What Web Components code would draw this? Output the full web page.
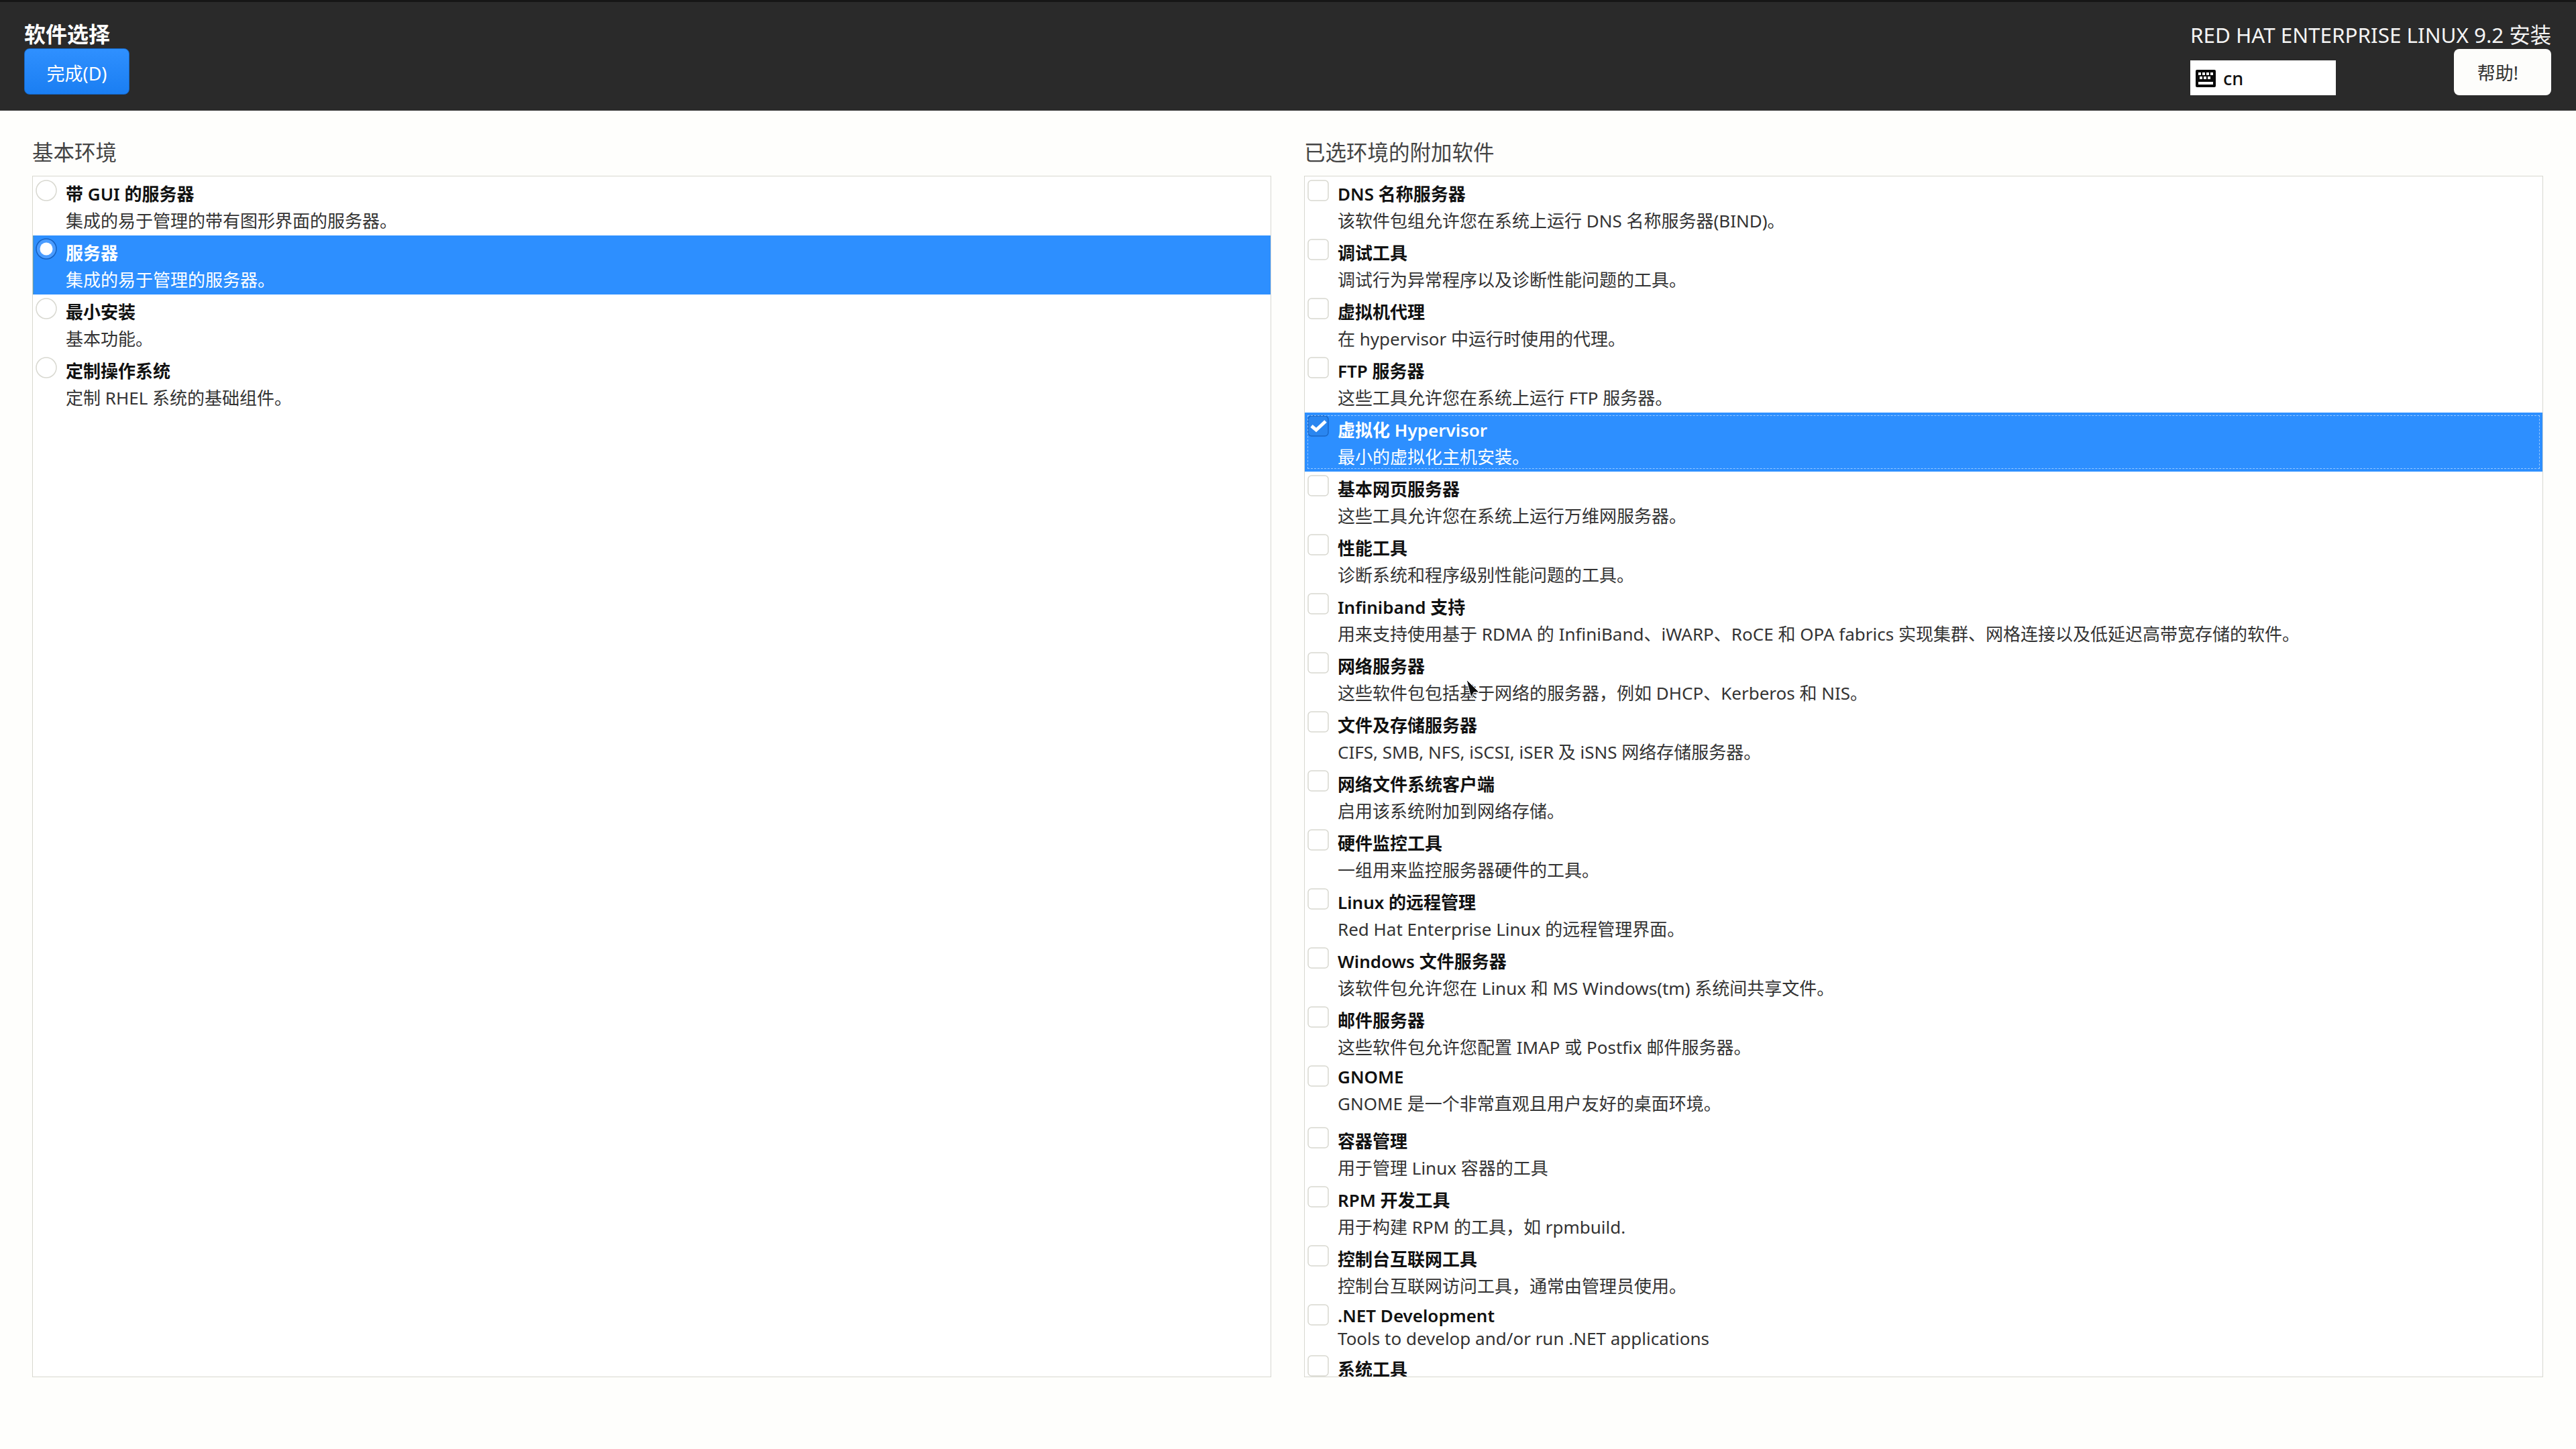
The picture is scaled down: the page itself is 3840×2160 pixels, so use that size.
<!DOCTYPE html>
<html lang="zh">
<head>
<meta charset="utf-8">
<title>软件选择</title>
<style>
    html, body { margin: 0; padding: 0; background: #fefefc; }
    body {
        width: 3840px;
        height: 2160px;
        overflow: hidden;
        position: relative;
        font-family: "Noto Sans", "Noto Sans CJK SC", sans-serif;
    }
</style>
</head>
<body>
<install-header>
    <span slot="title">软件选择</span>
    <span slot="product">RED HAT ENTERPRISE LINUX 9.2 安装</span>
</install-header>

<install-main>
    <option-panel label="基本环境">
        <option-row kind="radio"><span slot="name">带 GUI 的服务器</span>集成的易于管理的带有图形界面的服务器。</option-row>
        <option-row kind="radio" selected><span slot="name">服务器</span>集成的易于管理的服务器。</option-row>
        <option-row kind="radio"><span slot="name">最小安装</span>基本功能。</option-row>
        <option-row kind="radio"><span slot="name">定制操作系统</span>定制 RHEL 系统的基础组件。</option-row>
    </option-panel>
    <option-panel label="已选环境的附加软件">
        <option-row><span slot="name">DNS 名称服务器</span>该软件包组允许您在系统上运行 DNS 名称服务器(BIND)。</option-row>
        <option-row><span slot="name">调试工具</span>调试行为异常程序以及诊断性能问题的工具。</option-row>
        <option-row><span slot="name">虚拟机代理</span>在 hypervisor 中运行时使用的代理。</option-row>
        <option-row><span slot="name">FTP 服务器</span>这些工具允许您在系统上运行 FTP 服务器。</option-row>
        <option-row selected focused><span slot="name">虚拟化 Hypervisor</span>最小的虚拟化主机安装。</option-row>
        <option-row><span slot="name">基本网页服务器</span>这些工具允许您在系统上运行万维网服务器。</option-row>
        <option-row><span slot="name">性能工具</span>诊断系统和程序级别性能问题的工具。</option-row>
        <option-row><span slot="name">Infiniband 支持</span>用来支持使用基于 RDMA 的 InfiniBand、iWARP、RoCE 和 OPA fabrics 实现集群、网格连接以及低延迟高带宽存储的软件。</option-row>
        <option-row><span slot="name">网络服务器</span>这些软件包包括基于网络的服务器，例如 DHCP、Kerberos 和 NIS。</option-row>
        <option-row><span slot="name">文件及存储服务器</span>CIFS, SMB, NFS, iSCSI, iSER 及 iSNS 网络存储服务器。</option-row>
        <option-row><span slot="name">网络文件系统客户端</span>启用该系统附加到网络存储。</option-row>
        <option-row><span slot="name">硬件监控工具</span>一组用来监控服务器硬件的工具。</option-row>
        <option-row><span slot="name">Linux 的远程管理</span>Red Hat Enterprise Linux 的远程管理界面。</option-row>
        <option-row><span slot="name">Windows 文件服务器</span>该软件包允许您在 Linux 和 MS Windows(tm) 系统间共享文件。</option-row>
        <option-row><span slot="name">邮件服务器</span>这些软件包允许您配置 IMAP 或 Postfix 邮件服务器。</option-row>
        <option-row variant="tall"><span slot="name">GNOME</span>GNOME 是一个非常直观且用户友好的桌面环境。</option-row>
        <option-row><span slot="name">容器管理</span>用于管理 Linux 容器的工具</option-row>
        <option-row><span slot="name">RPM 开发工具</span>用于构建 RPM 的工具，如 rpmbuild.</option-row>
        <option-row><span slot="name">控制台互联网工具</span>控制台互联网访问工具，通常由管理员使用。</option-row>
        <option-row variant="latin"><span slot="name">.NET Development</span>Tools to develop and/or run .NET applications</option-row>
        <option-row><span slot="name">系统工具</span>这组软件包允许您进行各种系统管理。</option-row>
    </option-panel>
</install-main>

<mouse-cursor></mouse-cursor>

<script>
const FONT = '"Noto Sans", "Noto Sans CJK SC", sans-serif';

class InstallHeader extends HTMLElement {
    constructor() {
        super();
        this.attachShadow({ mode: 'open' });
        this.shadowRoot.innerHTML = `
            <style>
                :host {
                    display: flex;
                    justify-content: space-between;
                    box-sizing: border-box;
                    height: 165px;
                    padding: 28px 37px 23px 36px;
                    background: #2a2a2a;
                    border-top: 3px solid #161616;
                    border-bottom: 1px solid #3c3c3c;
                    font-family: ${FONT};
                    color: #fff;
                }
                .left, .right { display: flex; flex-direction: column; justify-content: space-between; }
                .right { width: 538px; }
                .title { font-size: 32px; font-weight: 700; line-height: 40px; }
                .product { font-size: 31.4px; line-height: 42px; text-align: right; white-space: nowrap; color: #f4f4f4; }
                .tools { display: flex; justify-content: space-between; align-items: flex-end; }
                .btn {
                    box-sizing: border-box;
                    height: 69px;
                    display: flex;
                    align-items: center;
                    justify-content: center;
                    font-size: 27px;
                    border-radius: 8px;
                }
                .done {
                    width: 157px;
                    padding-top: 3px;
                    color: #fff;
                    background: linear-gradient(#2f90ff, #1a7ef2);
                    border: 1px solid #1465c4;
                }
                .help { width: 145px; padding-right: 14px; color: #333; background: #fdfdfb; }
                .kb {
                    box-sizing: border-box;
                    width: 217px;
                    height: 52px;
                    display: flex;
                    align-items: center;
                    gap: 11px;
                    padding-left: 8px;
                    background: #fff;
                    color: #111;
                    font-size: 27px;
                    font-weight: 500;
                }
                .kb span { padding-top: 1px; }
                .kb svg { margin-top: 2px; }
                svg { display: block; }
            </style>
            <div class="left">
                <div class="title"><slot name="title"></slot></div>
                <div class="btn done">完成(D)</div>
            </div>
            <div class="right">
                <div class="product"><slot name="product"></slot></div>
                <div class="tools">
                    <div class="kb">
                        <svg width="30" height="26" viewBox="0 0 30 26">
                            <rect width="30" height="26" rx="2" fill="#0a0a0a"/>
                            <g fill="#fff">
                                <rect x="4" y="4" width="4" height="4"/><rect x="10" y="4" width="4" height="4"/><rect x="16" y="4" width="4" height="4"/><rect x="22" y="4" width="4" height="4"/>
                                <rect x="6" y="10" width="4" height="4"/><rect x="12" y="10" width="4" height="4"/><rect x="18" y="10" width="4" height="4"/>
                                <rect x="4" y="18" width="22" height="4"/>
                            </g>
                        </svg>
                        <span>cn</span>
                    </div>
                    <div class="btn help">帮助!</div>
                </div>
            </div>
        `;
    }
}

class InstallMain extends HTMLElement {
    constructor() {
        super();
        this.attachShadow({ mode: 'open' });
        this.shadowRoot.innerHTML = `
            <style>
                :host {
                    display: grid;
                    grid-template-columns: 1847px 1847px;
                    column-gap: 49px;
                    padding: 41px 48px 0 48px;
                }
            </style>
            <slot></slot>
        `;
    }
}

class OptionPanel extends HTMLElement {
    constructor() {
        super();
        this.attachShadow({ mode: 'open' });
        this.shadowRoot.innerHTML = `
            <style>
                :host { display: block; font-family: ${FONT}; }
                .label { height: 56px; line-height: 42px; font-size: 31.5px; color: #444; }
                .box {
                    box-sizing: border-box;
                    height: 1791px;
                    overflow: hidden;
                    background: #fff;
                    border: 1px solid #d8d8d0;
                }
            </style>
            <div class="label"></div>
            <div class="box"><slot></slot></div>
        `;
        this.shadowRoot.querySelector('.label').textContent = this.getAttribute('label');
    }
}

class OptionRow extends HTMLElement {
    constructor() {
        super();
        this.attachShadow({ mode: 'open' });
        const radio = this.getAttribute('kind') === 'radio';
        const selected = this.hasAttribute('selected');
        let mark = '';
        if (radio) {
            mark = selected
                ? '<svg width="32" height="32" viewBox="0 0 32 32"><circle cx="16" cy="16" r="15" fill="#4a9cff" stroke="#1560bf" stroke-width="1.5"/><circle cx="16" cy="16" r="9.5" fill="#fff"/></svg>'
                : '<svg width="32" height="32" viewBox="0 0 32 32"><circle cx="16" cy="16" r="15" fill="#fff" stroke="#d8d8d0" stroke-width="1.5"/></svg>';
        } else {
            mark = selected
                ? '<svg width="32" height="32" viewBox="0 0 32 32"><rect x="1" y="1" width="30" height="30" rx="5" fill="#2a86f0" stroke="#1a68c8" stroke-width="1.5"/><path d="M6 16l7 6L27 9" fill="none" stroke="#fff" stroke-width="5"/></svg>'
                : '<svg width="32" height="32" viewBox="0 0 32 32"><rect x="1" y="1" width="30" height="30" rx="5" fill="#fff" stroke="#d8d8d0" stroke-width="1.5"/></svg>';
        }
        this.shadowRoot.innerHTML = `
            <style>
                :host {
                    display: flex;
                    box-sizing: border-box;
                    height: 88px;
                    padding-left: 4px;
                    position: relative;
                    font-size: 26px;
                    line-height: 40px;
                    color: #333;
                    white-space: nowrap;
                }
                :host([selected]) { background: #2d8fff; color: #fff; }
                :host([kind="radio"][selected]) { box-shadow: inset 1px 0 #5f9bb0; }
                :host([focused])::after {
                    content: "";
                    position: absolute;
                    inset: 4px;
                    border: 1px dashed rgba(255, 255, 255, 0.5);
                }
                :host([variant="tall"]) { height: 92px; }
                :host([variant="latin"]) { height: 76px; line-height: 34px; }
                .mark { width: 45px; padding-top: 5px; flex: none; }
                :host([selected]) .mark { padding-top: 4px; }
                .mark svg { display: block; }
                .text { padding-top: 6px; }
                :host([variant="tall"]) .text { padding-top: 2px; }
                :host([variant="latin"]) .text { padding-top: 5px; }
                .name { font-weight: 600; color: #111; }
                :host([selected]) .name { color: #fff; }
            </style>
            <div class="mark">${mark}</div>
            <div class="text">
                <div class="name"><slot name="name"></slot></div>
                <div class="desc"><slot></slot></div>
            </div>
        `;
    }
}

class MouseCursor extends HTMLElement {
    constructor() {
        super();
        this.attachShadow({ mode: 'open' });
        this.shadowRoot.innerHTML = `
            <style>
                :host { display: block; position: absolute; left: 2184px; top: 1012px; width: 24px; height: 30px; }
                svg { display: block; }
            </style>
            <svg width="24" height="30" viewBox="0 0 24 30">
                <path d="M2 1l7 27 4-8h8z" fill="#111" stroke="#fff" stroke-width="1"/>
            </svg>
        `;
    }
}

customElements.define('install-header', InstallHeader);
customElements.define('install-main', InstallMain);
customElements.define('option-panel', OptionPanel);
customElements.define('option-row', OptionRow);
customElements.define('mouse-cursor', MouseCursor);
</script>
</body>
</html>
